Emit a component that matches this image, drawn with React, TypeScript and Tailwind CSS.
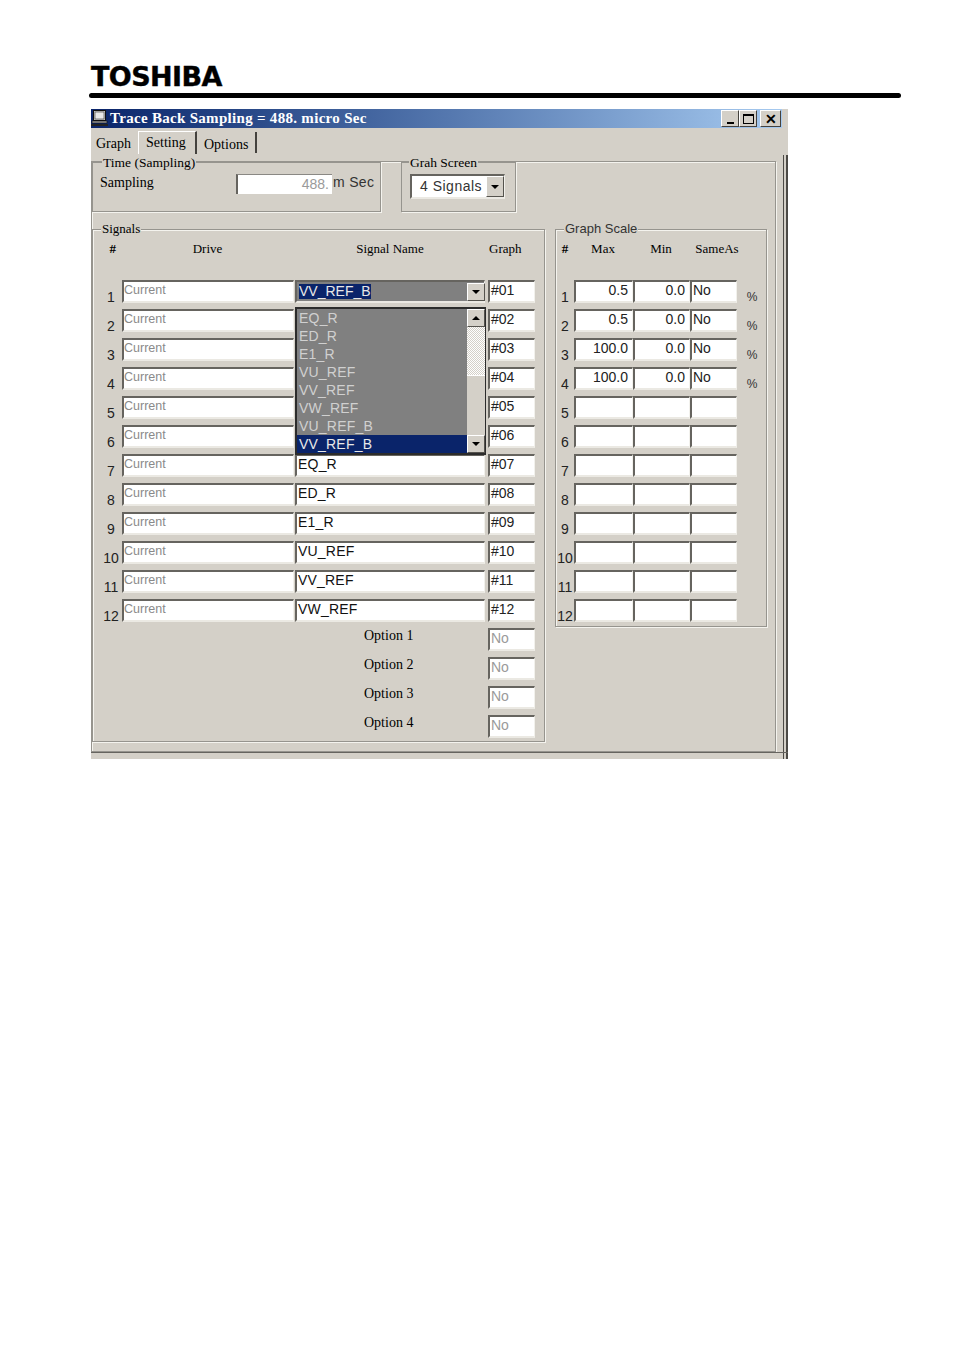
const serif = 'font-["Liberation_Serif",serif]';

const inputEdge =
  'border-t-2 border-l-2 border-r border-b-2 border-t-[#66645f] border-l-[#66645f] border-r-[#f2f1ec] border-b-[#ebe9e3] bg-white';

const signalNames: Record<number, string> = {
  7: 'EQ_R',
  8: 'ED_R',
  9: 'E1_R',
  10: 'VU_REF',
  11: 'VV_REF',
  12: 'VW_REF',
};

const listItems = ['EQ_R', 'ED_R', 'E1_R', 'VU_REF', 'VV_REF', 'VW_REF', 'VU_REF_B'];

const scaleValues = [
  { max: '0.5', min: '0.0', same: 'No' },
  { max: '0.5', min: '0.0', same: 'No' },
  { max: '100.0', min: '0.0', same: 'No' },
  { max: '100.0', min: '0.0', same: 'No' },
];

const rows = [1, 2, 3, 4, 5, 6, 7, 8, 9, 10, 11, 12];

function Box({ text = '', className = '' }: { text?: string; className?: string }) {
  return (
    <div className={`h-[23px] flex items-center overflow-hidden whitespace-nowrap leading-none ${inputEdge} ${className}`}>
      {text}
    </div>
  );
}

function Legend({ label, className }: { label: string; className: string }) {
  return (
    <span className={`absolute bg-[#d4d0c8] px-[1px] whitespace-nowrap leading-4 ${className}`}>{label}</span>
  );
}

function Arrow() {
  return <span className="w-0 h-0 border-x-[4px] border-x-transparent border-t-[4px] border-t-black" />;
}

function ArrowUp() {
  return <span className="w-0 h-0 border-x-[4px] border-x-transparent border-b-[4px] border-b-black" />;
}

function ScrollButton({ children, className = '' }: { children: React.ReactNode; className?: string }) {
  return (
    <div className={`bg-[#d4d0c8] border-t border-l border-t-white border-l-white border-r border-b border-r-[#55534e] border-b-[#55534e] flex items-center justify-center ${className}`}>
      {children}
    </div>
  );
}

function TitleIcon() {
  return (
    <svg width="17" height="17" viewBox="0 0 17 17" className="shrink-0">
      <rect x="2.5" y="0.5" width="12" height="10" fill="#c8c8c8" stroke="#111" />
      <rect x="4" y="2" width="9" height="7" fill="#e8e8e8" stroke="#333" strokeWidth="0.6" />
      <rect x="1" y="11" width="15" height="2" fill="#aaa" stroke="#111" strokeWidth="0.7" />
      <rect x="0" y="14" width="17" height="2" fill="#222" />
    </svg>
  );
}

function WinButton({ children, className = '' }: { children: React.ReactNode; className?: string }) {
  return (
    <div className={`h-[17px] bg-[#d4d0c8] border-r border-b border-r-[#44423e] border-b-[#44423e] border-t border-l border-t-white border-l-white flex items-center justify-center ${className}`}>
      {children}
    </div>
  );
}

function SignalList() {
  return (
    <div className="absolute left-[202px] top-[77px] w-[191px] h-[148px] border-2 border-r border-[#2c2c2c] bg-[#808080] flex text-[14px] leading-[18px] tracking-[0.2px] text-[#d0d0d0]">
      <div className="flex-1">
        {listItems.map((item) => (
          <div key={item} className="h-[18px] pl-[2px]">{item}</div>
        ))}
        <div className="h-[18px] pl-[2px] bg-[#0a246a] text-[#e8e8e8]">VV_REF_B</div>
      </div>
      <div className="w-[18px] flex flex-col">
        <ScrollButton className="h-[18px]"><ArrowUp /></ScrollButton>
        <div className="h-[48px] bg-[repeating-conic-gradient(#ffffff_0_25%,#d4d0c8_0_50%)] bg-[length:2px_2px]" />
        <div className="h-[60px] bg-[#d4d0c8] border-t border-t-white" />
        <ScrollButton className="h-[18px]"><Arrow /></ScrollButton>
      </div>
    </div>
  );
}

function SignalsGroup() {
  return (
    <div className="relative w-[453px] h-[513px] border border-[#96948e] shadow-[1px_1px_0_#f4f3ee,inset_1px_1px_0_#f4f3ee]">
      <Legend label="Signals" className={`${serif} text-[13px] text-black left-[8px] top-[-9px]`} />
      <div className={`${serif} text-[13px] grid grid-cols-[29px_173px_190px_50px] h-[50px] pt-[11px] leading-4 text-black`}>
        <span className="text-right pr-[6px] font-bold">#</span>
        <span className="text-center pr-[2px]">Drive</span>
        <span className="text-center">Signal Name</span>
        <span className="pl-[4px]">Graph</span>
      </div>
      <div className="flex flex-col gap-[6px]">
        {rows.map((n) => (
          <div key={n} className="grid grid-cols-[29px_172px_1px_190px_3px_47px] h-[23px]">
            <span className="text-[14px] text-center pl-[7px] pt-[9px] leading-4 text-[#222]">{n}</span>
            <Box text="Current" className="text-[#8a8a8a] text-[12.5px] pb-[2px]" />
            <span />
            {n === 1 ? (
              <div className={`h-[23px] flex items-center pl-[2px] text-[14px] ${inputEdge} !bg-[#808080]`}>
                <span className="bg-[#0a246a] text-[#e8e8e8] leading-[15px]">VV_REF_B</span>
                <ScrollButton className="ml-auto -mr-px w-[18px] h-[18px]"><Arrow /></ScrollButton>
              </div>
            ) : (
              <Box text={signalNames[n] ?? ''} className="text-[#111] text-[14px] pb-[3px] pl-px tracking-[0.2px]" />
            )}
            <span />
            <Box text={`#${String(n).padStart(2, '0')}`} className="text-[#222] text-[14px] pb-[3px] pl-px" />
          </div>
        ))}
      </div>
      <div className="flex flex-col gap-[6px] mt-[6px]">
        {[1, 2, 3, 4].map((n) => (
          <div key={n} className="grid grid-cols-[271px_124px_47px] h-[23px]">
            <span />
            <span className={`${serif} text-[14px] leading-4 text-black`}>Option {n}</span>
            <Box text="No" className="text-[#9a9a9a] text-[14px] pb-[3px] pl-px" />
          </div>
        ))}
      </div>
      <SignalList />
    </div>
  );
}

function ScaleGroup() {
  return (
    <div className="relative w-[212px] h-[398px] ml-[10px] border border-[#96948e] shadow-[1px_1px_0_#f4f3ee,inset_1px_1px_0_#f4f3ee]">
      <Legend label="Graph Scale" className="text-[13px] text-[#333] left-[8px] top-[-9px]" />
      <div className={`${serif} text-[13px] h-[50px] pt-[11px] leading-4 grid grid-cols-[18px_58px_58px_60px] text-black`}>
        <span className="text-center font-bold">#</span>
        <span className="text-center">Max</span>
        <span className="text-center">Min</span>
        <span className="text-center pr-[6px]">SameAs</span>
      </div>
      <div className="flex flex-col gap-[6px]">
        {rows.map((n) => {
          const v = scaleValues[n - 1];
          return (
            <div key={n} className="grid grid-cols-[18px_59px_57px_47px_30px] h-[23px]">
              <span className="text-[14px] text-center pt-[9px] leading-4 text-[#222]">{n}</span>
              <Box text={v?.max ?? ''} className="justify-end pr-[4px] pb-[3px] text-[#222] text-[14px]" />
              <Box text={v?.min ?? ''} className="justify-end pr-[4px] pb-[3px] text-[#222] text-[14px]" />
              <Box text={v?.same ?? ''} className="text-[#222] text-[14px] pb-[3px] pl-px" />
              {v && <span className="text-[12px] pt-[9px] leading-4 text-center text-[#333]">%</span>}
            </div>
          );
        })}
      </div>
    </div>
  );
}

export default function App() {
  return (
    <div className='bg-white min-h-[1351px] pt-[60px] font-["Liberation_Sans",sans-serif]'>
      <div className='pl-[91px] font-["DejaVu_Sans",sans-serif] font-bold text-[27px] leading-[33px] tracking-[-0.6px] text-black [-webkit-text-stroke:0.4px_black]'>TOSHIBA</div>
      <div className="ml-[89px] w-[812px] h-[5px] bg-black rounded-full" />

      <div className="ml-[91px] mt-[11px] w-[697px] h-[650px] bg-[#d4d0c8] border-r-[6px] border-r-[#d4d0c8] relative">
        <div className="h-[19px] flex items-center bg-gradient-to-r from-[#0a246a] to-[#a6caf0] pr-[1px]">
          <TitleIcon />
          <span className={`${serif} font-bold text-[15px] tracking-[0.3px] text-white ml-[2px] leading-none`}>Trace Back Sampling = 488. micro Sec</span>
          <div className="ml-auto flex items-center">
            <WinButton className="w-[18px] items-end pb-[2px]"><span className="w-[7px] h-[2px] bg-black" /></WinButton>
            <WinButton className="w-[18px]"><span className="w-[11px] h-[10px] border border-black border-t-2" /></WinButton>
            <WinButton className="w-[21px] ml-[3px] text-[14px] font-bold leading-none">✕</WinButton>
          </div>
        </div>

        <div className={`${serif} text-[14px] text-black flex h-[33px] pl-[1px] pt-[3px]`}>
          <div className="w-[46px] pl-[4px] pt-[5px] leading-4">Graph</div>
          <div className="w-[59px] h-[23px] border-l border-t border-l-white border-t-white border-r-2 border-r-[#44423e] pl-[7px] pt-[3px] leading-4">Setting</div>
          <div className="w-[60px] h-[21px] border-r-2 border-r-[#44423e] mt-[1px] pl-[7px] pt-[5px] leading-4">Options</div>
        </div>

        <div className="w-[685px] h-[591px] border border-[#96948e] shadow-[1px_1px_0_#f4f3ee,inset_1px_1px_0_#f4f3ee]">
          <div className="flex h-[50px]">
            <div className="relative w-[289px] border border-[#96948e] shadow-[1px_1px_0_#f4f3ee]">
              <Legend label="Time (Sampling)" className={`${serif} text-[13.5px] text-black left-[9px] top-[-8px]`} />
              <div className="flex h-full">
                <span className={`${serif} text-[14px] ml-[7px] mt-[12px] leading-4 w-[136px] text-black`}>Sampling</span>
                <div className="w-[96px] h-[20px] mt-[11px] text-right pr-[3px] text-[14px] leading-[19px] text-[#9a9a9a] bg-white border-l-2 border-l-[#66645f] border-t border-t-[#8a8884]">488.</div>
                <span className="text-[14px] leading-4 mt-[11px] ml-[1px] text-[#333] tracking-[0.3px] whitespace-nowrap">m Sec</span>
              </div>
            </div>
            <div className="relative w-[115px] ml-[20px] border border-[#96948e] shadow-[1px_1px_0_#f4f3ee]">
              <Legend label="Grah Screen" className={`${serif} text-[13.5px] text-black left-[7px] top-[-8px]`} />
              <div className={`ml-[8px] mt-[11px] w-[95px] h-[25px] flex items-center text-[14px] text-[#333] ${inputEdge} border-r-[#66645f] border-b-[#66645f]`}>
                <span className="pl-[8px] tracking-[0.5px] w-[72px] overflow-hidden whitespace-nowrap">4 Signals</span>
                <ScrollButton className="ml-auto w-[18px] h-[21px]"><Arrow /></ScrollButton>
              </div>
            </div>
          </div>
          <div className="flex mt-[17px]">
            <SignalsGroup />
            <ScaleGroup />
          </div>
        </div>
        <div className="absolute right-[-6px] top-[46px] bottom-0 w-[5px] border-l border-r-2 border-x-[#4c4a46]" />
        <div className="absolute left-0 right-[-6px] bottom-[6px] h-px bg-[#66645f]" />
      </div>
    </div>
  );
}
